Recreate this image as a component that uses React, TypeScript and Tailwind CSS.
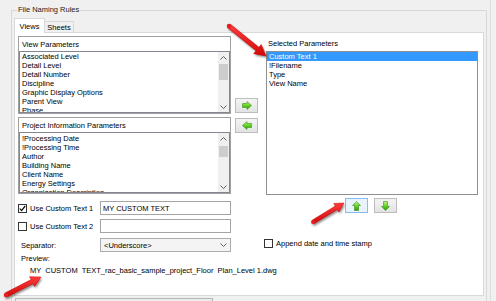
import React from "react";

type Pt = [number, number];

const viewParams = [
  "Associated Level",
  "Detail Level",
  "Detail Number",
  "Discipline",
  "Graphic Display Options",
  "Parent View",
  "Phase",
];
const projectParams = [
  "!Processing Date",
  "!Processing Time",
  "Author",
  "Building Name",
  "Client Name",
  "Energy Settings",
  "Organization Description",
];
const selectedParams = ["Custom Text 1", "!Filename", "Type", "View Name"];

// polygon for a fat annotation arrow from tail to tip
function arrowPoints(tail: Pt, tip: Pt, shaft: number, headLen: number, headW: number) {
  const dx = tip[0] - tail[0];
  const dy = tip[1] - tail[1];
  const len = Math.hypot(dx, dy);
  const ux = dx / len;
  const uy = dy / len;
  const nx = -uy;
  const ny = ux;
  const bx = tip[0] - ux * headLen;
  const by = tip[1] - uy * headLen;
  const p = (x: number, y: number) => `${x.toFixed(1)},${y.toFixed(1)}`;
  return [
    p(tail[0] + (nx * shaft) / 2, tail[1] + (ny * shaft) / 2),
    p(bx + (nx * shaft) / 2, by + (ny * shaft) / 2),
    p(bx + (nx * headW) / 2, by + (ny * headW) / 2),
    p(tip[0], tip[1]),
    p(bx - (nx * headW) / 2, by - (ny * headW) / 2),
    p(bx - (nx * shaft) / 2, by - (ny * shaft) / 2),
    p(tail[0] - (nx * shaft) / 2, tail[1] - (ny * shaft) / 2),
  ].join(" ");
}

const redArrows: { tail: Pt; tip: Pt; shaft: number; head: number; w: number }[] = [
  { tail: [229, 26], tip: [266, 56], shaft: 4.5, head: 11, w: 12 },
  { tail: [313, 222], tip: [344, 203], shaft: 4, head: 9, w: 10 },
  { tail: [6, 295], tip: [41, 277], shaft: 4.5, head: 10, w: 11 },
];

function Chevron({ up }: { up?: boolean }) {
  return (
    <svg width="7" height="4" viewBox="0 0 7 4">
      <polyline
        points={up ? "0.5,3.5 3.5,0.5 6.5,3.5" : "0.5,0.5 3.5,3.5 6.5,0.5"}
        fill="none"
        stroke="#606060"
        strokeWidth="1"
      />
    </svg>
  );
}

function ScrollBar({ thumb }: { thumb: string }) {
  return (
    <div className="w-[11px] h-full shrink-0 bg-[#f0f0f0] flex flex-col">
      <div className="h-[11px] flex items-center justify-center">
        <Chevron up />
      </div>
      <div className="flex-1 px-[1px]">
        <div className={`bg-[#cdcdcd] ${thumb}`} />
      </div>
      <div className="h-[11px] flex items-center justify-center">
        <Chevron />
      </div>
    </div>
  );
}

function ParamPanel({
  title,
  items,
  height,
  listPad,
  thumb,
}: {
  title: string;
  items: string[];
  height: string;
  listPad: string;
  thumb: string;
}) {
  return (
    <div className={`${height} border border-[#a0a0a0] flex flex-col`}>
      <div className="h-[14px] shrink-0 flex items-center pl-[3px]">{title}</div>
      <div className="flex-1 min-h-0 border border-[#828790] flex overflow-hidden">
        <div className={`flex-1 overflow-hidden pl-[2px] ${listPad}`}>
          {items.map((it) => (
            <div key={it} className="h-[9px] whitespace-nowrap">
              {it}
            </div>
          ))}
        </div>
        <ScrollBar thumb={thumb} />
      </div>
    </div>
  );
}

function Checkbox({ checked }: { checked?: boolean }) {
  return (
    <div className="w-[9px] h-[9px] shrink-0 border border-[#333] bg-white flex items-center justify-center">
      {checked && (
        <svg width="7" height="7" viewBox="0 0 7 7">
          <polyline points="0.8,3.6 2.6,5.6 6.2,1" fill="none" stroke="#111" strokeWidth="1.3" />
        </svg>
      )}
    </div>
  );
}

function GreenArrow({ dir }: { dir: "right" | "left" | "up" | "down" }) {
  const pts = {
    right: "0.5,2.5 5,2.5 5,0.5 9.5,4.5 5,8.5 5,6.5 0.5,6.5",
    left: "9.5,2.5 5,2.5 5,0.5 0.5,4.5 5,8.5 5,6.5 9.5,6.5",
    up: "4.5,0.5 8.5,4.5 6.5,4.5 6.5,9.5 2.5,9.5 2.5,4.5 0.5,4.5",
    down: "4.5,9.5 8.5,5.5 6.5,5.5 6.5,0.5 2.5,0.5 2.5,5.5 0.5,5.5",
  }[dir];
  const vertical = dir === "up" || dir === "down";
  return (
    <svg width={vertical ? 9 : 10} height={vertical ? 10 : 9} viewBox={vertical ? "0 0 9 10" : "0 0 10 9"}>
      <defs>
        <linearGradient id={`g-${dir}`} x1="0" y1="0" x2="0" y2="1">
          <stop offset="0" stopColor="#c4f58c" />
          <stop offset="0.5" stopColor="#62d323" />
          <stop offset="1" stopColor="#2a9a0c" />
        </linearGradient>
      </defs>
      <polygon points={pts} fill={`url(#g-${dir})`} stroke="#3a8f18" strokeWidth="0.6" strokeLinejoin="round" />
    </svg>
  );
}

function SmallButton({ dir, focused }: { dir: "right" | "left" | "up" | "down"; focused?: boolean }) {
  return (
    <div
      className={`w-[23px] h-[15px] shrink-0 border flex items-center justify-center ${
        focused ? "border-[#86bdf0] bg-[#e8f3fd]" : "border-[#bdbdbd] bg-gradient-to-b from-[#f4f4f4] to-[#e3e3e3]"
      }`}
    >
      <GreenArrow dir={dir} />
    </div>
  );
}

export default function App() {
  return (
    <div className="relative w-[496px] h-[301px] overflow-hidden bg-[#f0f0f0] flex font-['Liberation_Sans',Arial,sans-serif] text-[7.5px] leading-[9px] text-black">
      {/* File Naming Rules group box */}
      <div className="ml-[11px] mt-[10px] w-[476px] h-[300px] shrink-0 border-l border-t border-r border-[#d8d8d8] flex flex-col">
        <div className="-mt-[6px] ml-[5px] w-fit px-[1px] bg-[#f0f0f0] text-[#222]">File Naming Rules</div>

        {/* tabs */}
        <div className="ml-[2px] mt-[4px] h-[14px] flex items-end">
          <div className="relative z-10 -mb-px h-[15px] w-[31px] bg-white border-l border-t border-r border-[#d9d9d9] flex items-center justify-center">
            Views
          </div>
          <div className="h-[11px] w-[29px] bg-[#f0f0f0] border-t border-r border-[#d9d9d9] flex items-center justify-center">
            Sheets
          </div>
        </div>

        {/* tab page */}
        <div className="ml-[2px] w-[470px] h-[264px] shrink-0 border border-[#d9d9d9] bg-white flex pl-[3px] pt-[3px]">
          {/* left column */}
          <div className="w-[213px] shrink-0 flex flex-col">
            <ParamPanel
              title="View Parameters"
              items={viewParams}
              height="h-[78px]"
              listPad="pt-0"
              thumb="mt-[1px] h-[16px]"
            />
            <div className="mt-[3px]">
              <ParamPanel
                title="Project Information Parameters"
                items={projectParams}
                height="h-[77px]"
                listPad="pt-[1px]"
                thumb="mt-[2px] h-[11px]"
              />
            </div>

            <div className="mt-[7px] h-[14px] flex items-center">
              <Checkbox checked />
              <span className="ml-[3px] whitespace-nowrap">Use Custom Text 1</span>
              <div className="ml-auto w-[131px] h-[14px] border border-[#a5a5a5] bg-white flex items-center pl-[2px]">
                MY CUSTOM TEXT
              </div>
            </div>
            <div className="mt-[4px] h-[14px] flex items-center">
              <Checkbox />
              <span className="ml-[3px] whitespace-nowrap">Use Custom Text 2</span>
              <div className="ml-auto w-[131px] h-[14px] border border-[#a5a5a5] bg-white" />
            </div>
            <div className="mt-[5px] h-[14px] flex items-center">
              <span className="pl-[3px]">Separator:</span>
              <div className="ml-auto w-[131px] h-[14px] border border-[#acacac] bg-[#f4f4f4] flex items-center justify-between pl-[3px] pr-[3px]">
                <span>&lt;Underscore&gt;</span>
                <Chevron />
              </div>
            </div>
            <div className="mt-[2px] pl-[3px]">Preview:</div>
            <div className="mt-[3px] pl-[12px] whitespace-pre">
              MY  CUSTOM  TEXT_rac_basic_sample_project_Floor  Plan_Level 1.dwg
            </div>
          </div>

          {/* add / remove buttons */}
          <div className="ml-[4px] w-[23px] shrink-0 flex flex-col">
            <div className="mt-[62px]">
              <SmallButton dir="right" />
            </div>
            <div className="mt-[5px]">
              <SmallButton dir="left" />
            </div>
          </div>

          {/* right column */}
          <div className="ml-[8px] w-[212px] shrink-0 flex flex-col">
            <div className="h-[15px] flex items-center pl-[2px]">Selected Parameters</div>
            <div className="h-[144px] border border-[#8f8f8f] bg-white">
              {selectedParams.map((it, i) => (
                <div
                  key={it}
                  className={`h-[9px] pl-[2px] whitespace-nowrap ${i === 0 ? "bg-[#3399ff] text-white" : ""}`}
                >
                  {it}
                </div>
              ))}
            </div>
            <div className="mt-[3px] flex">
              <div className="ml-[79px]">
                <SmallButton dir="up" focused />
              </div>
              <div className="ml-[6px]">
                <SmallButton dir="down" />
              </div>
            </div>
            <div className="mt-[26px] -ml-[2px] flex items-center">
              <Checkbox />
              <span className="ml-[3px] whitespace-nowrap">Append date and time stamp</span>
            </div>
          </div>
        </div>

        <div className="ml-[3px] mt-[2px] w-[198px] h-[10px] border border-[#b5b5b5] bg-[#ebebeb]" />
      </div>
      <div className="ml-[3px] w-px h-full bg-[#dcdcdc]" />

      {/* red annotation arrows */}
      <svg className="absolute inset-0 pointer-events-none" width="496" height="301" viewBox="0 0 496 301">
        <defs>
          <linearGradient id="red" x1="0" y1="0" x2="0" y2="1">
            <stop offset="0" stopColor="#ff3b3b" />
            <stop offset="1" stopColor="#d10808" />
          </linearGradient>
          <filter id="sh" x="-20%" y="-20%" width="140%" height="140%">
            <feGaussianBlur stdDeviation="0.9" />
          </filter>
        </defs>
        {redArrows.map((a, i) => (
          <g key={i}>
            <g transform="translate(1.2 1.8)" filter="url(#sh)" opacity="0.45">
              <polygon points={arrowPoints(a.tail, a.tip, a.shaft, a.head, a.w)} fill="#000" strokeLinejoin="round" />
              <circle cx={a.tail[0]} cy={a.tail[1]} r={a.shaft / 2} fill="#000" />
            </g>
            <polygon
              points={arrowPoints(a.tail, a.tip, a.shaft, a.head, a.w)}
              fill="url(#red)"
              stroke="#c40000"
              strokeWidth="0.5"
              strokeLinejoin="round"
            />
            <circle cx={a.tail[0]} cy={a.tail[1]} r={a.shaft / 2} fill="#e81e1e" />
          </g>
        ))}
      </svg>
    </div>
  );
}
